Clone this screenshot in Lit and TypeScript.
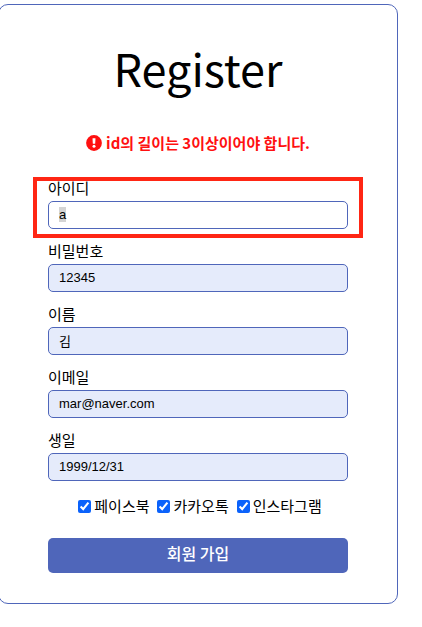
import { LitElement, html, css } from "lit";
import { customElement, query } from "lit/decorators.js";

interface Field {
  id: string;
  label: string;
  value: string;
  invalid?: boolean;
}

const FIELDS: Field[] = [
  { id: "user-id", label: "아이디", value: "a", invalid: true },
  { id: "password", label: "비밀번호", value: "12345" },
  { id: "name", label: "이름", value: "김" },
  { id: "email", label: "이메일", value: "mar@naver.com" },
  { id: "birthday", label: "생일", value: "1999/12/31" },
];

const CHANNELS = ["페이스북", "카카오톡", "인스타그램"];

@customElement("app-root")
export class AppRoot extends LitElement {
  @query("#user-id") private userId!: HTMLInputElement;

  static styles = css`
    :host {
      display: block;
      overflow: hidden;
      padding: 4px 24px 24px 0;
      background: #fff;
      color: #000;
      font-family: "Noto Sans CJK KR", sans-serif;
      font-size: 15px;
      line-height: 24px;
    }
    .card {
      box-sizing: border-box;
      margin-left: -2px;
      padding: 30px 49px;
      border: 1px solid #4f66ba;
      border-radius: 10px;
      display: flex;
      flex-direction: column;
    }
    h1 {
      margin: 0;
      font-size: 45px;
      font-weight: 400;
      line-height: 66px;
      text-align: center;
    }
    .error {
      margin: 30px 0 22px;
      display: flex;
      align-items: center;
      justify-content: center;
      gap: 4px;
      color: #ff1010;
      font-weight: 700;
    }
    .error svg {
      width: 16px;
      height: 16px;
      flex: none;
    }
    .fields {
      display: flex;
      flex-direction: column;
      gap: 11px;
    }
    .field {
      position: relative;
      display: flex;
      flex-direction: column;
      gap: 2px;
    }
    .field label {
      line-height: 22px;
    }
    .invalid::after {
      content: "";
      position: absolute;
      inset: 0 -15px -9px;
      border: 4px solid #ff2614;
      pointer-events: none;
    }
    .text {
      box-sizing: border-box;
      width: 100%;
      height: 28px;
      margin: 0;
      padding: 0 10px 2px;
      border: 1px solid #4f66ba;
      border-radius: 5px;
      outline: none;
      background: #e5ebfb;
      color: #000;
      font-family: "Liberation Sans", "Noto Sans CJK KR", sans-serif;
      font-size: 13px;
    }
    .invalid .text {
      background: #fff;
    }
    .text::selection {
      background: #d4d4d4;
      color: #000;
    }
    .channels {
      margin: 13px 0 20px;
      padding: 0 0 0 4px;
      display: flex;
      justify-content: center;
      gap: 8px;
    }
    .channel {
      display: flex;
      align-items: center;
      gap: 3px;
    }
    .channel input {
      width: 13px;
      height: 13px;
      margin: 0;
      accent-color: #0b62fb;
    }
    .submit {
      height: 35px;
      padding: 0 0 6px;
      border: 0;
      border-radius: 5px;
      background: #4f66ba;
      color: #fff;
      font: 500 16px "Noto Sans CJK KR", sans-serif;
    }
  `;

  firstUpdated() {
    this.userId.focus();
    this.userId.select();
  }

  render() {
    return html`
      <form class="card" @submit=${(e: Event) => e.preventDefault()}>
        <h1>Register</h1>
        <p class="error" role="alert">
          <svg viewBox="0 0 16 16" aria-hidden="true">
            <circle cx="8" cy="8" r="7.9" fill="#ff1010" />
            <path d="M6.5 3.6q0-.4.4-.4h2.2q.4 0 .4.4l-.3 4.8q0 .4-.4.4H7.2q-.4 0-.4-.4z" fill="#fff" />
            <circle cx="8" cy="11.2" r="1.5" fill="#fff" />
          </svg>
          <span>id의 길이는 3이상이어야 합니다.</span>
        </p>
        <div class="fields">
          ${FIELDS.map(
            (f) => html`
              <div class="field ${f.invalid ? "invalid" : ""}">
                <label for=${f.id}>${f.label}</label>
                <input class="text" id=${f.id} type="text" .value=${f.value} />
              </div>
            `
          )}
        </div>
        <div class="channels">
          ${CHANNELS.map(
            (name) => html`<label class="channel"><input type="checkbox" checked />${name}</label>`
          )}
        </div>
        <button class="submit" type="submit">회원 가입</button>
      </form>
    `;
  }
}
